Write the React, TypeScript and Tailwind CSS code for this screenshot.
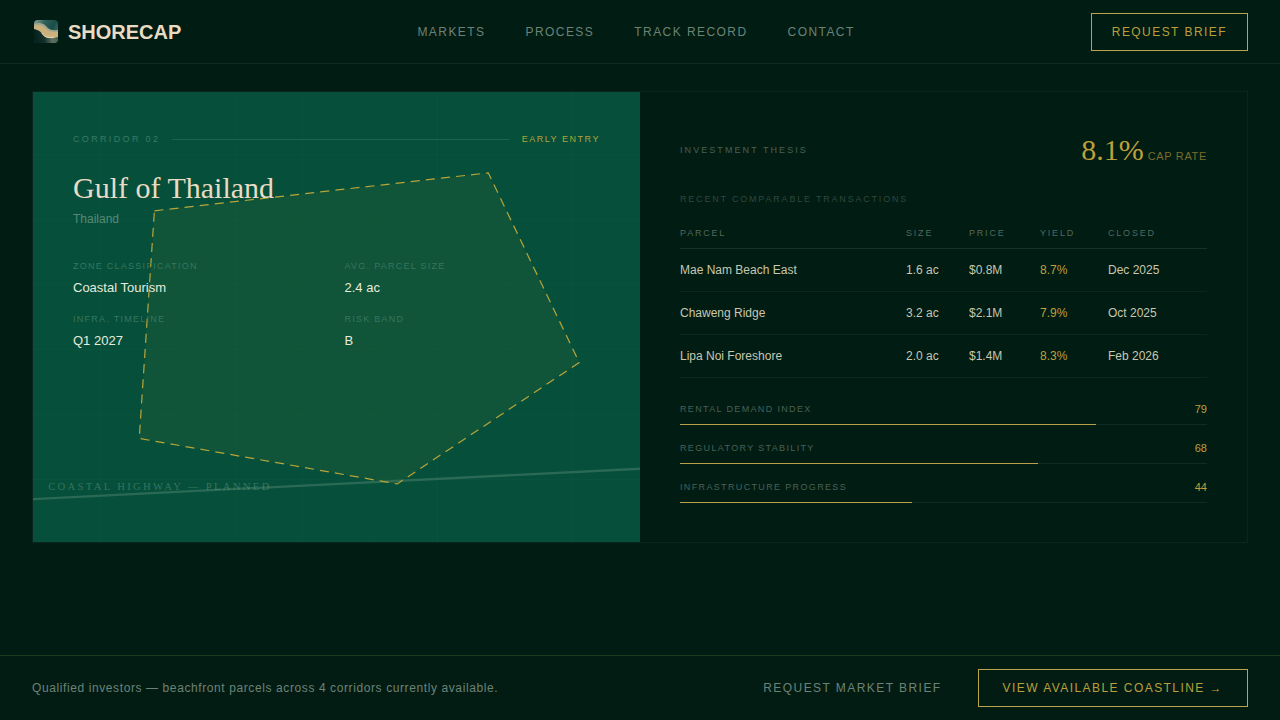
import React from "react";

const navLinks = ["Markets", "Process", "Track Record", "Contact"];

const facts = [
  { label: "Zone Classification", value: "Coastal Tourism" },
  { label: "Avg. Parcel Size", value: "2.4 ac" },
  { label: "Infra. Timeline", value: "Q1 2027" },
  { label: "Risk Band", value: "B" },
];

const transactions = [
  { parcel: "Mae Nam Beach East", size: "1.6 ac", price: "$0.8M", rate: "8.7%", closed: "Dec 2025" },
  { parcel: "Chaweng Ridge", size: "3.2 ac", price: "$2.1M", rate: "7.9%", closed: "Oct 2025" },
  { parcel: "Lipa Noi Foreshore", size: "2.0 ac", price: "$1.4M", rate: "8.3%", closed: "Feb 2026" },
];

const metrics = [
  { label: "Rental Demand Index", value: 79 },
  { label: "Regulatory Stability", value: 68 },
  { label: "Infrastructure Progress", value: 44 },
];

function Logo() {
  return (
    <svg viewBox="0 0 28 28" className="size-7" aria-hidden="true">
      <defs>
        <clipPath id="logo-clip">
          <rect x="2" y="2" width="24" height="23" rx="4" />
        </clipPath>
        <linearGradient id="logo-sea" x1="0" y1="0" x2="1" y2="0.6">
          <stop offset="0" stopColor="#8fa79b" />
          <stop offset="0.35" stopColor="#2f625b" />
          <stop offset="0.7" stopColor="#1a4d49" />
          <stop offset="1" stopColor="#48736a" />
        </linearGradient>
        <linearGradient id="logo-land" x1="0" y1="0.5" x2="1" y2="0.4">
          <stop offset="0" stopColor="#04201a" />
          <stop offset="0.4" stopColor="#12302a" />
          <stop offset="0.75" stopColor="#5f7263" />
          <stop offset="1" stopColor="#3c5a50" />
        </linearGradient>
      </defs>
      <g clipPath="url(#logo-clip)">
        <rect x="2" y="2" width="24" height="24" fill="url(#logo-sea)" />
        <path d="M2 6 C7 4 11 5 14 8 C17 12 21 13 26 12 L26 15 C20 16 16 14 13 11 C10 8 6 8 2 9 Z" fill="#a5a88c" />
        <path d="M2 8 C7 6 11 8 14 11 C17 14 21 14 26 14 L26 20 C22 21 17 21 14 20 C10 17 8 13 2 12 Z" fill="#cbb27c" />
        <path d="M2 11 C7 12 9 14 11 17 C14 21 19 21 26 19 L26 26 L2 26 Z" fill="url(#logo-land)" />
        <path d="M10 15 C12 19 16 20 22 19" fill="none" stroke="#e2d8b4" strokeWidth="1" />
      </g>
    </svg>
  );
}

function ParcelMap() {
  const columns = Array.from({ length: 8 }, (_, i) => ((i + 1) * 400) / 9);
  const rows = Array.from({ length: 6 }, (_, i) => ((i + 1) * 300) / 7);
  return (
    <svg
      viewBox="0 0 400 300"
      preserveAspectRatio="xMidYMid slice"
      className="absolute inset-0 size-full"
      aria-hidden="true"
    >
      <g stroke="#a8d0b8" strokeOpacity="0.04" strokeWidth="0.5">
        {columns.map((x) => (
          <line key={x} x1={x} y1="0" x2={x} y2="300" />
        ))}
        {rows.map((y) => (
          <line key={y} x1="0" y1={y} x2="400" y2={y} />
        ))}
      </g>
      <line x1="0" y1="270" x2="400" y2="250" stroke="#7fa890" strokeOpacity="0.3" strokeWidth="1.5" />
      <text
        x="10"
        y="264"
        fontSize="7"
        fill="#7fa890"
        fillOpacity="0.42"
        className="font-['Liberation_Serif',serif] tracking-[0.22em]"
      >
        COASTAL HIGHWAY — PLANNED
      </text>
      <polygon
        points="80,80 300,55 360,180 240,260 70,230"
        fill="#8f9a20"
        fillOpacity="0.08"
        stroke="#b8a53a"
        strokeWidth="0.8"
        strokeDasharray="6 4"
      />
    </svg>
  );
}

function CorridorPanel() {
  return (
    <section className="relative bg-[#064f3b] p-10">
      <ParcelMap />
      <div className="relative">
        <div className="flex items-center gap-3 text-[9px] leading-[14px] uppercase">
          <span className="tracking-[0.26em] text-[#3a7a64]">Corridor 02</span>
          <span className="h-px flex-1 bg-[#1d6450]" />
          <span className="tracking-[0.17em] text-[#b3a33c]">Early Entry</span>
        </div>
        <h1 className="mt-6 font-['Liberation_Serif',serif] text-[30px] leading-9 text-[#e8dcc4]">
          Gulf of Thailand
        </h1>
        <p className="mt-1 text-xs leading-[18px] text-[#578a75]">Thailand</p>
        <dl className="mt-[30px] grid grid-cols-2 gap-x-4 gap-y-[13px]">
          {facts.map((fact) => (
            <div key={fact.label}>
              <dt className="text-[9px] leading-4 tracking-[0.14em] text-[#36775d] uppercase">{fact.label}</dt>
              <dd className="mt-1 text-[13px] leading-5 text-[#e6ecdc]">{fact.value}</dd>
            </div>
          ))}
        </dl>
      </div>
    </section>
  );
}

function ThesisPanel() {
  return (
    <section className="px-10 pt-10 pb-[39px]">
      <div className="flex items-center justify-between">
        <h2 className="text-[9px] leading-4 tracking-[0.23em] text-[#4a6053] uppercase">Investment Thesis</h2>
        <p className="font-['Liberation_Serif',serif] text-[30px] leading-9 text-[#bfa03a]">
          8.1%
          <span className="ml-1 font-['Liberation_Sans',sans-serif] text-[11px] leading-none tracking-[0.06em] text-[#7b6d2b] uppercase">
            Cap Rate
          </span>
        </p>
      </div>

      <h3 className="mt-[23px] text-[9px] leading-4 tracking-[0.2em] text-[#30483c] uppercase">
        Recent Comparable Transactions
      </h3>
      <table className="mt-3 w-full table-fixed text-left text-xs leading-[18px] text-[#c8c7b0]">
        <thead>
          <tr className="border-b border-[#16302a] text-[9px] tracking-[0.2em] text-[#52695c] uppercase">
            <th className="pt-[5px] pb-1.5 font-normal">Parcel</th>
            <th className="w-[63px] pt-[5px] pb-1.5 font-normal">Size</th>
            <th className="w-[71px] pt-[5px] pb-1.5 font-normal">Price</th>
            <th className="w-[68px] pt-[5px] pb-1.5 font-normal">Yield</th>
            <th className="w-[99px] pt-[5px] pb-1.5 font-normal">Closed</th>
          </tr>
        </thead>
        <tbody>
          {transactions.map((t) => (
            <tr key={t.parcel} className="border-b border-[#0d261e]">
              <td className="py-3">{t.parcel}</td>
              <td className="py-3">{t.size}</td>
              <td className="py-3">{t.price}</td>
              <td className="py-3 text-[#bfa03a]">{t.rate}</td>
              <td className="py-3">{t.closed}</td>
            </tr>
          ))}
        </tbody>
      </table>

      <div className="mt-[22px] flex flex-col gap-3.5">
        {metrics.map((m) => (
          <div key={m.label}>
            <div className="flex items-center justify-between leading-[18px]">
              <span className="text-[9px] tracking-[0.15em] text-[#4a6155] uppercase">{m.label}</span>
              <span className="text-[11px] text-[#bfa03a]">{m.value}</span>
            </div>
            <div className="mt-1.5 h-px bg-[#122b22]">
              <div className="h-px bg-[#b9a24a]" style={{ width: `${m.value}%` }} />
            </div>
          </div>
        ))}
      </div>
    </section>
  );
}

export default function App() {
  return (
    <div className="flex min-h-screen flex-col bg-[#011c13] font-['Liberation_Sans',sans-serif]">
      <header className="flex h-16 items-center justify-between border-b border-[#0c2a20] px-8">
        <a href="#home" className="flex items-center gap-2">
          <Logo />
          <span className="text-xl font-bold text-[#e8dcc4]">SHORECAP</span>
        </a>
        <nav className="flex gap-10 text-xs tracking-[0.12em] text-[#6b8377] uppercase">
          {navLinks.map((link) => (
            <a key={link} href="#section">
              {link}
            </a>
          ))}
        </nav>
        <button className="border border-[#b9a44e] px-5 py-2.5 text-xs leading-4 tracking-[0.12em] text-[#b9a03c] uppercase">
          Request Brief
        </button>
      </header>

      <main className="flex-1 px-8 pt-[27px] pb-8">
        <article className="grid grid-cols-2 border border-[#0c261d]">
          <CorridorPanel />
          <ThesisPanel />
        </article>
      </main>

      <footer className="flex items-center justify-between border-t border-[#1e3a1e] bg-[#031c13] px-8 py-[13px]">
        <p className="text-xs tracking-[0.05em] text-[#6b8377]">
          Qualified investors — beachfront parcels across 4 corridors currently available.
        </p>
        <div className="flex items-center gap-3 text-xs leading-4 tracking-[0.12em]">
          <button className="px-6 py-2.5 text-[#6b8377] uppercase">Request Market Brief</button>
          <button className="border border-[#b9a44e] px-6 py-2.5 text-[#b9a03c] uppercase">
            View Available Coastline →
          </button>
        </div>
      </footer>
    </div>
  );
}
